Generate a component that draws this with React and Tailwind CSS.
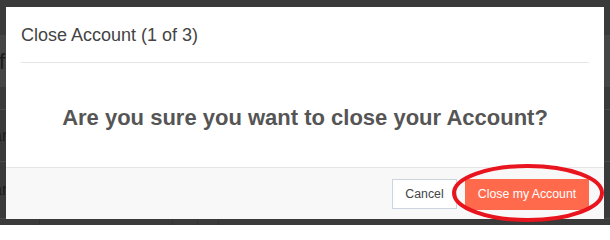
import { useState } from "react";

const font = { fontFamily: '"Liberation Sans", Arial, sans-serif' };

// page behind the overlay, only its left edge peeks out
const BackgroundPage = () => (
    <div className="w-full h-full bg-[#3a3a3a] flex flex-col overflow-hidden">
        <div className="h-[35px]" />
        <div className="h-[52px] bg-[#454545] flex items-center text-[22px] text-[#1c1c1c] -ml-[1px]">f</div>
        <div className="h-[23px] border-b border-[#4a4a4a]" />
        <div className="h-[52px] border-b border-[#4a4a4a] flex items-center text-[16px] text-[#1c1c1c] -ml-[7px]">ar</div>
        <div className="h-[57px] border-b border-[#4a4a4a] flex items-center text-[16px] text-[#1c1c1c] -ml-[7px]">ar</div>
        <div className="flex-1 flex">
            <div className="w-[40px] border-r border-[#333]" />
            <div className="w-[133px] border-r border-[#333]" />
            <div className="w-[25px] border-r border-[#333]" />
            <div className="w-[21px] border-r border-[#333]" />
        </div>
    </div>
);

export default function App() {
    const [open, setOpen] = useState(true);

    return (
        <div className="relative w-[610px] h-[225px] overflow-hidden" style={font}>
            <BackgroundPage />

            {open && (
                <div className="absolute left-[6px] top-[7px] w-[598px] h-[212px] bg-white flex flex-col">
                    {/* Header */}
                    <div className="mx-[15px] h-[56px] border-b border-[#e5e5e5] flex items-center pt-[1px]">
                        <h4 className="text-[18px] text-[#444]">Close Account (1 of 3)</h4>
                    </div>

                    {/* Body */}
                    <div className="flex-1 flex items-center justify-center pt-[4px]">
                        <h2 className="text-[22px] font-bold text-[#555]">
                            Are you sure you want to close your Account?
                        </h2>
                    </div>

                    {/* Footer */}
                    <div className="h-[52px] bg-[#f8f8f8] border-t border-[#e5e5e5] flex items-center justify-end gap-[8px] px-[15px] pt-[1px]">
                        <button
                            type="button"
                            onClick={() => setOpen(false)}
                            className="w-[65px] h-[30px] border border-[#ccd4e0] bg-white text-[12.3px] text-[#444]"
                        >
                            Cancel
                        </button>
                        <div className="relative">
                            <button
                                type="button"
                                className="w-[124px] h-[31px] bg-[#ff6a4d] text-[12.3px] text-white"
                            >
                                Close my Account
                            </button>
                            {/* red marker circle drawn over the button */}
                            <svg
                                className="absolute -left-[14px] -top-[16px] pointer-events-none"
                                width="154"
                                height="60"
                                viewBox="0 0 154 60"
                            >
                                <ellipse cx="77" cy="30" rx="74" ry="27" fill="none" stroke="#e8141e" strokeWidth="4" />
                            </svg>
                        </div>
                    </div>
                </div>
            )}
        </div>
    );
}
